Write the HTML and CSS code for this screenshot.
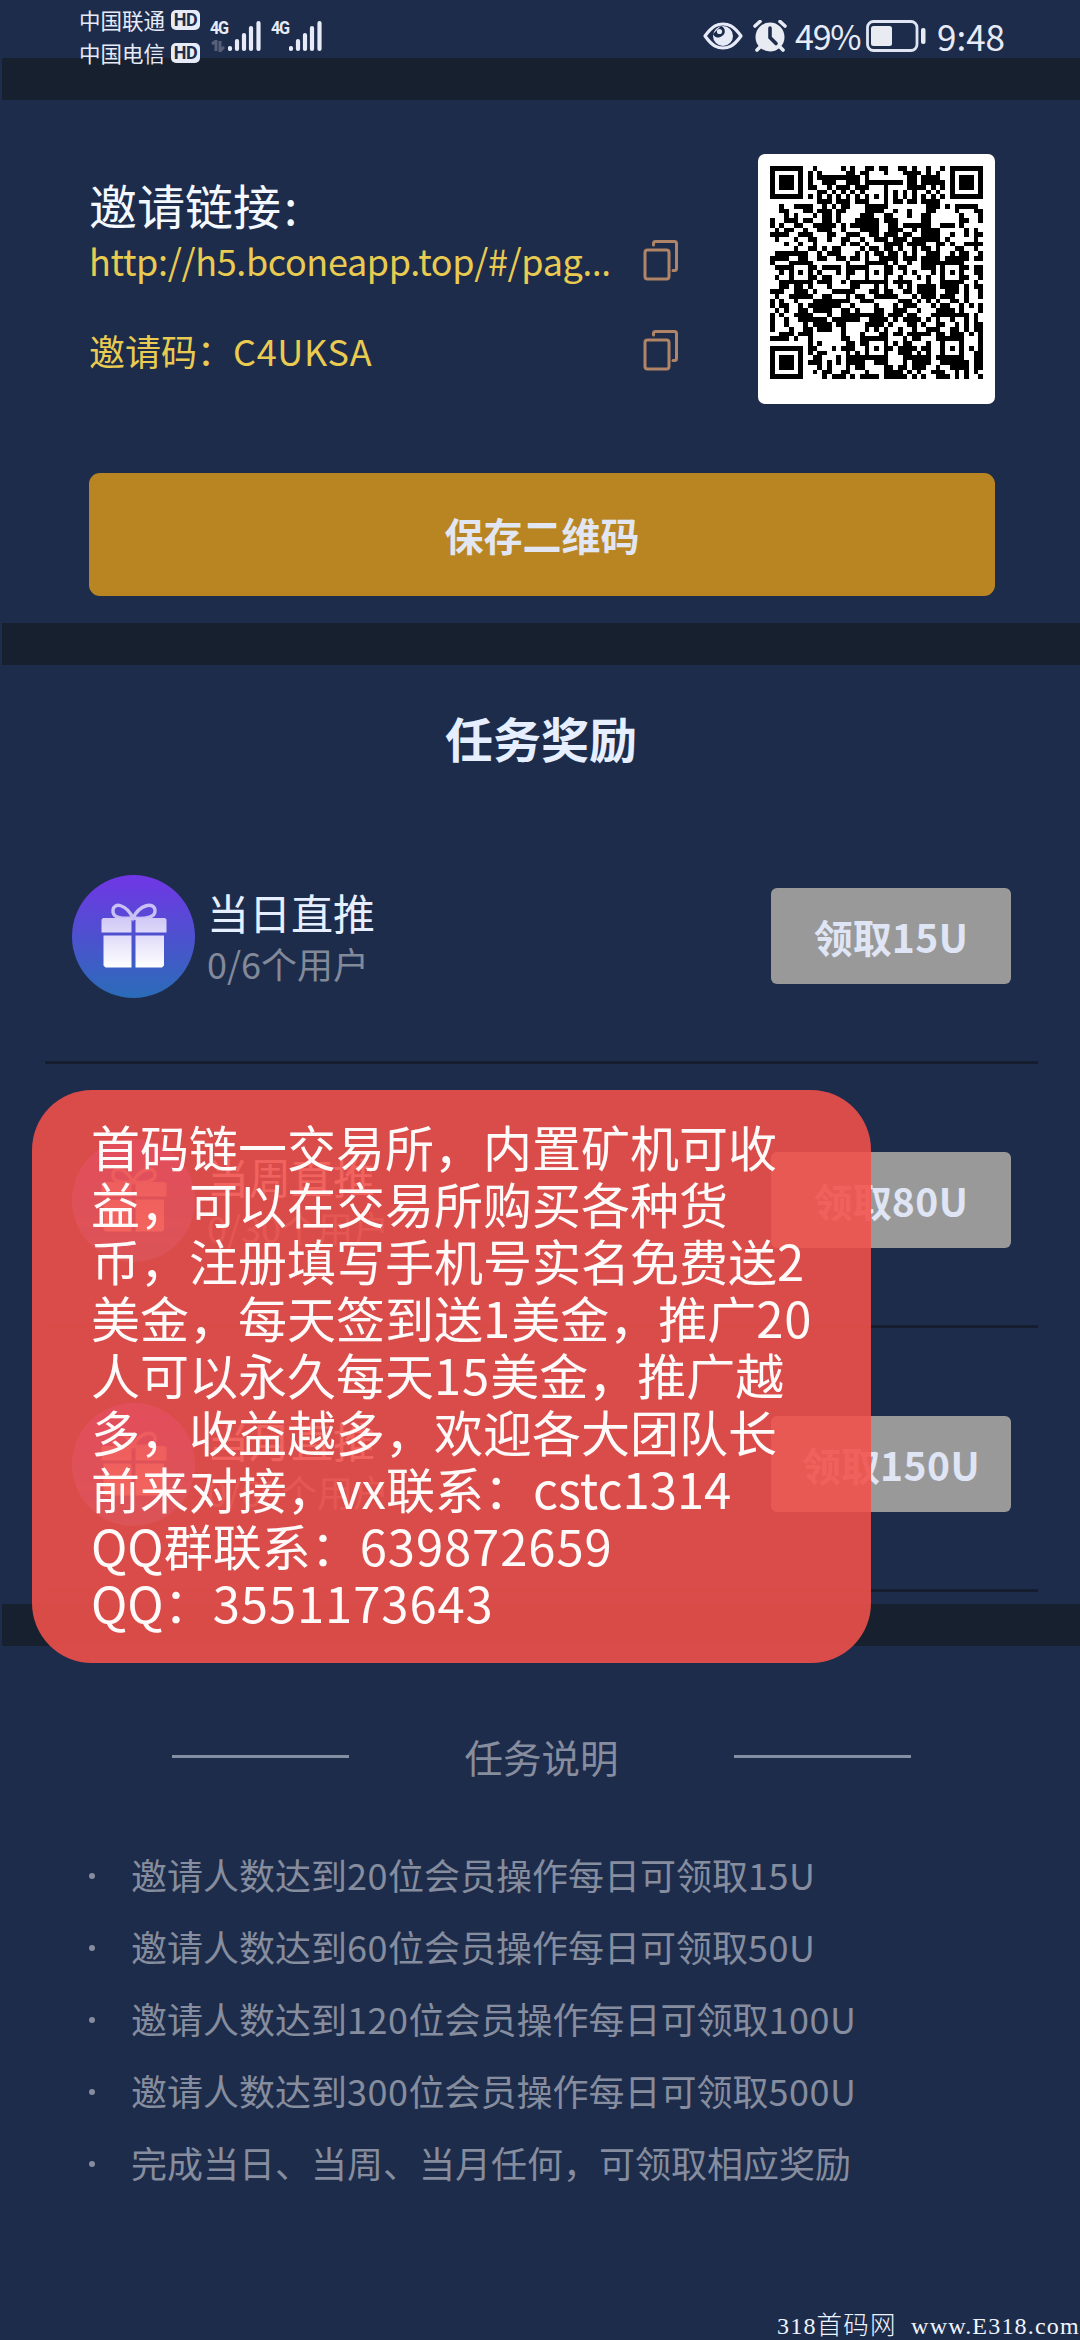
FILE: index.html
```html
<!DOCTYPE html>
<html lang="zh-CN">
<head>
<meta charset="utf-8">
<title>任务奖励</title>
<link rel="stylesheet" href="styles.css">
</head>
<body>
<svg class="defs" width="0" height="0" aria-hidden="true">
  <defs>
    <linearGradient id="disc" x1="0" y1="0" x2="0" y2="1">
      <stop offset="0" stop-color="#7136e6"/><stop offset="1" stop-color="#2a6cb8"/>
    </linearGradient>
    <linearGradient id="box" gradientUnits="userSpaceOnUse" x1="0" y1="28" x2="0" y2="93">
      <stop offset="0" stop-color="#c3b8f4"/><stop offset="1" stop-color="#ffffff"/>
    </linearGradient>
    <symbol id="gift" viewBox="0 0 123 123">
      <circle cx="61.5" cy="61.5" r="61.5" fill="url(#disc)"/>
      <path d="M61 43C54 29 42 27 41 35s9 9 20 8c11 1 23 0 22-8s-15-6-22 8z" fill="none" stroke="#c9c0f5" stroke-width="3.4"/>
      <path d="M31 43h28.500v14.500h-30V44.500zM63.500 43H93l1.500 1.500v13h-31zM31.500 60.500h28v32h-26l-2-2zM63.500 60.500H92V90.500l-2 2H63.500z" fill="url(#box)"/>
    </symbol>
    <symbol id="copy" viewBox="0 0 36 42">
      <path d="M10.500 6V4.500q0-2 2-2h19q2 0 2 2v25q0 2-2 2h-1.500" />
      <rect x="2" y="11" width="24" height="29" rx="2.500"/>
    </symbol>
    <symbol id="bars" viewBox="0 0 34 32">
      <path d="M2 28v1M9 21v8M16 15v14M23 8v21M30.500 3v26" stroke="#e6ebf7" stroke-width="4.200" stroke-linecap="round"/>
    </symbol>
  </defs>
</svg>

<header class="status">
  <div class="carriers">
    <div class="carrier">中国联通<b class="hd">HD</b></div>
    <div class="carrier">中国电信<b class="hd">HD</b></div>
  </div>
  <div class="signal">
    <div class="net"><span>4G</span>
      <svg class="updown" viewBox="0 0 14 12"><path d="M1 4l4-3v10M9 1v10l4-4" /></svg>
    </div>
    <svg class="bars"><use href="#bars"/></svg>
  </div>
  <div class="signal">
    <div class="net"><span>4G</span></div>
    <svg class="bars"><use href="#bars"/></svg>
  </div>
  <div class="indicators">
    <svg class="eye" viewBox="0 0 40 28">
      <path d="M2 14C10 3 15 2 20 2s10 1 18 12c-8 11-13 12-18 12S10 25 2 14z" fill="none" stroke="#e6ebf7" stroke-width="3.200" stroke-linejoin="round"/>
      <circle cx="20" cy="14" r="10" fill="#e6ebf7"/>
      <path d="M10 12a5.500 5.500 0 0 0 9 2 5.500 5.500 0 0 0-1-10z" fill="#1e2c4b"/>
      <circle cx="16.500" cy="9.500" r="2.600" fill="#e6ebf7"/>
    </svg>
    <svg class="alarm" viewBox="0 0 34 32">
      <circle cx="17" cy="17" r="14.500" fill="#e8ebf2"/>
      <path d="M2 6l5-4.500M32 6l-5-4.500M7 27l-3 3M27 27l3 3" stroke="#e8ebf2" stroke-width="3.600" stroke-linecap="round"/>
      <path d="M17 8v9.500l6 6" fill="none" stroke="#1e2c4b" stroke-width="3.600" stroke-linecap="round"/>
    </svg>
    <span class="percent">49%</span>
    <svg class="battery" viewBox="0 0 60 32">
      <rect x="1.500" y="1.500" width="49.500" height="29" rx="6" fill="none" stroke="#dfe5f2" stroke-width="2.800"/>
      <rect x="5" y="6" width="21" height="20" rx="2.500" fill="#e8ebf2"/>
      <rect x="55" y="8" width="4.500" height="16" rx="2" fill="#e8ebf2"/>
    </svg>
    <span class="clock">9:48</span>
  </div>
</header>

<main class="page">
  <div class="band"></div>
  <section class="invite">
    <div class="invite-top">
      <div class="invite-info">
        <h2 class="invite-title">邀请链接<span class="colon">:</span></h2>
        <div class="field"><span class="url">http://h5.bconeapp.top/#/pag<span class="dots">…</span></span><svg class="copy"><use href="#copy"/></svg></div>
        <div class="field"><span>邀请码：<span class="code">C4UKSA</span></span><svg class="copy"><use href="#copy"/></svg></div>
      </div>
      <div class="qr-card"><svg class="qr" viewBox="0 0 45 45" shape-rendering="crispEdges"><path id="qr-modules"/></svg></div>
    </div>
    <button class="save">保存二维码</button>
  </section>
  <div class="band"></div>
  <section class="rewards">
    <h2 class="rewards-title">任务奖励</h2>
    <div class="task">
      <svg class="gift"><use href="#gift"/></svg>
      <div class="task-text"><div class="task-name">当日直推</div><div class="task-count">0/6个用户</div></div>
      <button class="claim">领取<span class="num">15U</span></button>
    </div>
    <div class="task">
      <svg class="gift"><use href="#gift"/></svg>
      <div class="task-text"><div class="task-name">当周直推</div><div class="task-count">0/30个用户</div></div>
      <button class="claim">领取<span class="num">80U</span></button>
    </div>
    <div class="task">
      <svg class="gift"><use href="#gift"/></svg>
      <div class="task-text"><div class="task-name">当月直推</div><div class="task-count">0/60个用户</div></div>
      <button class="claim">领取<span class="num">150U</span></button>
    </div>
  </section>
  <div class="band"></div>
  <section class="notes">
    <h3 class="notes-title">任务说明</h3>
    <ul class="notes-list">
      <li><p>邀请人数达到<span class="num">20</span>位会员操作每日可领取<span class="num">15U</span></p></li>
      <li><p>邀请人数达到<span class="num">60</span>位会员操作每日可领取<span class="num">50U</span></p></li>
      <li><p>邀请人数达到<span class="num">120</span>位会员操作每日可领取<span class="num">100U</span></p></li>
      <li><p>邀请人数达到<span class="num">300</span>位会员操作每日可领取<span class="num">500U</span></p></li>
      <li><p>完成当日、当周、当月任何，可领取相应奖励</p></li>
    </ul>
  </section>
</main>

<aside class="popup">
  <div>首码链一交易所，内置矿机可收</div>
  <div>益，可以在交易所购买各种货</div>
  <div>币，注册填写手机号实名免费送<span class="num">2</span></div>
  <div>美金，每天签到送<span class="num">1</span>美金，推广<span class="num">20</span></div>
  <div>人可以永久每天<span class="num">15</span>美金，推广越</div>
  <div>多，收益越多，欢迎各大团队长</div>
  <div>前来对接，vx联系：cstc1314</div>
  <div>QQ群联系：<span class="num">639872659</span></div>
  <div>QQ：<span class="num">3551173643</span></div>
</aside>
<div class="watermark">318<span>首码网</span>  www.E318.com</div>
<script src="qr.js"></script>
</body>
</html>
```
FILE: qr.js
```js
// Dark data modules, one entry per row; "a-b" is an inclusive run of columns.
const rows = [
  "9 15 17 20-21 23-24 27-28 30 33 36", "8 10 16-17 19-20 24 28-31 33 35", "8 10-18 20 29-30 32-35",
  "8 11-13 16-18 20-27 29-30 32-36", "8-9 12 14-16 18-20 24 29-32 34 36", "10-11 13 15 17 19 24 26 28 30 33 35",
  "8 10 12 14 16 18 20 24 26 28 30 32 34 36", "10-12 14-16 18-20 24 26-27 29-30 32-35",
  "2 5-8 11 13 15-16 20-24 33-35 37 39-43", "2-3 7-8 10-12 14-15 20-23 26 29 33-34 39 43-44",
  "3 5 9 11-12 14 19-21 24-25 29 32-33 40 44", "0 3-5 7-8 11-12 14 18-22 24-26 32-33 40-41 44",
  "0 2 5-6 9-13 15 17-22 25-26 28-33 36-38 40", "1 3-4 7 10-12 15 19-22 25-27 30 32-35 41 43",
  "0-3 6-8 12-13 16-18 21-22 24-26 28-29 32-35 38 41 43-44", "1 5 8-9 12 15-16 19 22-24 26-28 30-35 37 43",
  "3 6 9 15 17-18 20 24-27 29-32 35-36 38 41-44", "5 8-9 11 13-14 19 21-22 24-25 27 30 32-33 35 39-40 43",
  "1-7 10 12-14 18 20 22-23 25-26 28 30 33-35 38 40-41 44", "0-3 6-7 10-11 14-15 17-18 20 23-26 28-30 32-35 37-41 43-44",
  "0 4-8 16 20-24 26 29 32-40", "1-4 8-9 11-14 16-20 24-25 27-28 32-34 36 40-41 43-44",
  "2 4 8 10 14 16-17 20 24-25 28 30 34 36 40 43-44", "1 4 8-9 11-12 16 20 24 27 31 33 36 40-41 44",
  "2-8 10-12 15 17-24 26-29 33 36-40 43", "2-3 5-6 8 12 17-18 22 24 27 29 31-34 36-39 41 43-44",
  "0-2 5-7 9 13-17 21-22 24-25 28-29 31-34 37-39 41 44", "1 4-8 11-12 16 18-19 22-26 30 32-34 36-38 41 44",
  "0 2 5 9-16 19-21 27-29 31 33 35 38-39 41", "0 2-3 6 8-14 17 22 26 28-30 34 36-37 40 42 44",
  "1 3 6-7 9-12 15-16 18 22-23 26-28 31 35-38 40 44", "0 2 5-8 12 15-23 25-27 29-30 34-41 43",
  "0 3 6-11 13-18 21-24 26 28-31 33 35 38 41 43", "0 3 7 9-12 14-15 20-23 25 29-30 32 35-36 39 41 43-44",
  "0 4 7-8 10-12 15 20 22 24 27 30 33-35 38-39 41 43-44", "2-4 6-8 15 19 23-24 26-27 29-33 35-36 38-40 42 44",
  "0-3 5 8 15-16 19-24 28 30-31 35-40 44", "8 10 16-17 19-20 24 26 28-29 33 36 40 44",
  "8-9 13 15-17 20 24-25 27-30 32-33 36 40 42 44", "8 10-11 16 18 20 24 27-29 31 33 36 40 43-44",
  "9-10 14 16-24 28-33 35-40 43-44", "8-10 12 14 16-19 22-24 28 30-33 36-41 43-44",
  "10 12 16 18-19 24-25 27-28 30-32 35 38-41 43-44", "9 11-12 15-16 20 24-27 29 31 34-36 39 41 43",
  "11 13-15 17 19-22 24-28 30 32 35-37 39 41 44"
];

const isFinder = (r, c) => (r < 8 && (c < 8 || c > 36)) || (r > 36 && c < 8);
let d = "";

rows.forEach((row, r) => {
  for (const run of row.split(" ")) {
    const [a, b = a] = run.split("-").map(Number);
    for (let c = a; c <= b; c++) if (!isFinder(r, c)) d += `M${c} ${r}h1v1h-1z`;
  }
});

// Finder patterns: 7x7 frame with a 3x3 core.
for (const [x, y] of [[0, 0], [38, 0], [0, 38]]) {
  d += `M${x} ${y}h7v7h-7zM${x + 1} ${y + 1}v5h5v-5zM${x + 2} ${y + 2}h3v3h-3z`;
}
// Centre dots of the alignment patterns.
for (const [x, y] of [[22, 6], [6, 22], [22, 22], [38, 22], [22, 38], [38, 38]]) {
  d += `M${x} ${y}h1v1h-1z`;
}
document.getElementById("qr-modules").setAttribute("d", d);
```
FILE: styles.css
```css
* { box-sizing: border-box; }
body {
  position: relative;
  margin: 0;
  width: 1080px;
  height: 2340px;
  overflow: hidden;
  background: #1e2c4b;
  color: #e6efff;
  font-family: "Noto Sans CJK SC", "Noto Sans", sans-serif;
}
h2, h3, ul, p { margin: 0; padding: 0; font-weight: 400; }
button { border: 0; padding: 0; font-family: inherit; }
.defs { position: absolute; }
.num { letter-spacing: .5px; }

/* System status bar, drawn over the page */
.status {
  position: absolute;
  z-index: 1;
  top: 0;
  left: 79px;
  width: 924px;
  height: 72px;
  display: flex;
  align-items: flex-start;
  color: #e6ebf7;
}
.carriers { width: 131px; padding-top: 3px; }
.carrier { display: flex; align-items: center; gap: 6px; height: 33px; font-size: 21.5px; white-space: nowrap; }
.hd {
  width: 29px;
  height: 20px;
  border-radius: 5px;
  background: #e6ebf7;
  color: #1e2c4b;
  font: 700 18px/20px Roboto, sans-serif;
  letter-spacing: -0.5px;
  text-align: center;
}
.signal { display: flex; width: 61px; padding-top: 20px; }
.net { width: 18px; font: 700 18px/16px "Roboto", sans-serif; letter-spacing: -1.5px; }
.net span { display: block; transform: scaleX(.9); transform-origin: left; }
.updown { display: block; width: 14px; height: 12px; margin: 4px 0 0 1px; fill: none; stroke: #566078; stroke-width: 3; }
.bars { width: 34px; height: 32px; }
.indicators { display: flex; align-items: center; margin-left: auto; height: 72px; font: 35px/70px "Noto Sans CJK SC", sans-serif; }
.eye { width: 40px; height: 28px; margin-right: 10px; }
.alarm { width: 34px; height: 32px; margin-right: 8px; }
.percent { width: 71px; font-size: 34px; letter-spacing: -1.2px; white-space: nowrap; }
.battery { width: 60px; height: 32px; margin-right: 11px; }
.clock { width: 66px; white-space: nowrap; }

.page { padding-top: 58px; }
.band { height: 42px; margin-left: 2px; background: #17202e; }

/* Invitation link, code and QR card */
.invite { height: 523px; padding: 54px 85px 0 89px; }
.invite-top { display: flex; justify-content: space-between; height: 319px; }
.invite-info { width: 590px; padding-top: 18px; }
.invite-title { height: 64px; font-size: 48px; line-height: 64px; color: #f4f8ff; white-space: nowrap; }
.colon { margin-left: 3px; }
.field { display: flex; justify-content: space-between; height: 90px; color: #e8cb50; font-size: 36px; line-height: 48px; white-space: nowrap; }
.url { letter-spacing: -.37px; }
.dots { font-family: "Noto Sans", sans-serif; letter-spacing: 0; }
.code { letter-spacing: .7px; }
.copy { width: 36px; height: 42px; margin-top: 3px; fill: none; stroke: #b08467; stroke-width: 3; stroke-linecap: round; }
.qr-card { width: 237px; height: 250px; padding: 12px; border-radius: 7px; background: #fff; }
.qr { display: block; width: 213px; height: 213px; }
.save { display: block; width: 906px; height: 123px; padding-bottom: 2px; border-radius: 11px; background: #b98522; color: #e1e6f2; font-size: 39px; font-weight: 700; }

/* Reward tasks */
.rewards { height: 939px; }
.rewards-title { height: 135px; padding: 37px 0 0 2px; font-size: 48px; line-height: 70px; font-weight: 700; text-align: center; }
.task {
  display: flex;
  align-items: center;
  height: 264px;
  margin: 0 42px 0 45px;
  padding: 11px 27px 0;
  border-bottom: 3px solid #151d2e;
}
.gift { width: 123px; height: 123px; margin-right: 12px; }
.task-name { font-size: 42px; line-height: 58px; height: 54px; }
.task-count { font-size: 36px; line-height: 52px; color: #828a9a; }
.claim { width: 240px; height: 96px; margin-left: auto; border-radius: 6px; background: #999; color: #dfe5f5; font-size: 39px; font-weight: 700; }

/* Task notes */
.notes { padding-top: 80px; color: #868d9e; }
.notes-title { display: flex; justify-content: center; align-items: center; gap: 115px; padding-left: 3px; font-size: 38.500px; line-height: 60px; }
.notes-title::before, .notes-title::after { content: ""; width: 177px; height: 3px; background: #858fa3; }
.notes-list { padding: 54px 0 0 89px; list-style: none; font-size: 36px; }
.notes-list li { display: flex; align-items: center; height: 72px; white-space: nowrap; }
.notes-list p { padding-bottom: 4px; }
.notes-list li::before { content: ""; width: 6px; height: 6px; margin-right: 36px; border-radius: 50%; background: #868d9e; }

/* Floating announcement */
.popup {
  position: absolute;
  top: 1090px;
  left: 32px;
  width: 839px;
  height: 573px;
  padding: 27px 59px;
  border-radius: 60px;
  background: rgba(241, 81, 74, .89);
  color: #fffafa;
  font-size: 49px;
  line-height: 57px;
  white-space: nowrap;
}
.popup .num { letter-spacing: .9px; }
.watermark {
  position: absolute;
  top: 2311px;
  left: 777px;
  font: 24px/30px "Liberation Serif", "Noto Sans CJK SC", serif;
  letter-spacing: 1.2px;
  color: #eef4ff;
  white-space: pre;
}
.watermark span { font-size: 25.500px; font-weight: 300; }
```
